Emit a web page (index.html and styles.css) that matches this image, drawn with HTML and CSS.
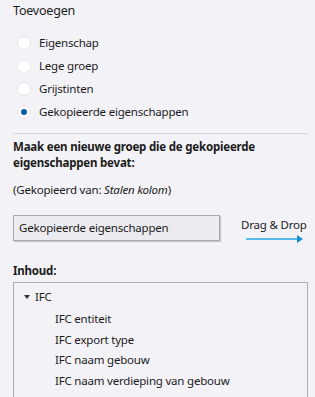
FILE: index.html
```html
<!DOCTYPE html>
<html lang="nl">
<head>
  <meta charset="UTF-8">
  <meta name="viewport" content="width=device-width, initial-scale=1.0">
  <title>Toevoegen</title>
  <link rel="stylesheet" href="styles.css">
</head>
<body>

  <div class="panel">
    <h2 class="title">Toevoegen</h2>

    <div class="radio-list">
      <label class="radio-row"><span class="radio"></span>Eigenschap</label>
      <label class="radio-row"><span class="radio"></span>Lege groep</label>
      <label class="radio-row"><span class="radio"></span>Grijstinten</label>
      <label class="radio-row"><span class="radio checked"></span>Gekopieerde eigenschappen</label>
    </div>

    <div class="separator"></div>

    <p class="intro">Maak een nieuwe groep die de gekopieerde eigenschappen bevat:</p>
    <p class="source">(Gekopieerd van: <em>Stalen kolom</em>)</p>

    <div class="name-row">
      <div class="name-box">Gekopieerde eigenschappen</div>
      <div class="drag">
        <span class="drag-label">Drag &amp; Drop</span>
        <svg class="drag-arrow" width="58" height="8" viewBox="0 0 58 8">
          <line x1="0" y1="4" x2="52" y2="4" stroke="#5ab9e6" stroke-width="2"/>
          <polygon points="51,0 57,4 51,8" fill="#1a8fd2"/>
        </svg>
      </div>
    </div>

    <p class="section-label">Inhoud:</p>

    <div class="tree">
      <div class="tree-node"><span class="caret"></span>IFC</div>
      <div class="tree-child">IFC entiteit</div>
      <div class="tree-child">IFC export type</div>
      <div class="tree-child">IFC naam gebouw</div>
      <div class="tree-child">IFC naam verdieping van gebouw</div>
    </div>
  </div>

</body>
</html>
```

FILE: styles.css
```css
body {
  background-color: #F3F2F7;
  font-family: "Noto Sans", "Open Sans", sans-serif;
  font-size: 11.5px;
  letter-spacing: -0.2px;
  color: #1b1b1b;
  margin: 0;
  padding: 0;
}

.panel {
  padding: 1px 7px 0 13px;
}

.title {
  font-size: 12.5px;
  font-weight: normal;
  line-height: 20px;
  margin: 0;
}

.radio-list {
  margin-top: 10px;
}

.radio-row {
  display: flex;
  align-items: center;
  height: 23px;
  padding-left: 4px;
}

.radio {
  width: 14px;
  height: 14px;
  box-sizing: border-box;
  border-radius: 50%;
  background: #FFF;
  border: 1px solid #E6E5EB;
  margin-right: 8px;
  display: flex;
  justify-content: center;
  align-items: center;
}

.radio.checked::after {
  content: "";
  width: 6px;
  height: 6px;
  border-radius: 50%;
  background: #0B5DA8;
}

.separator {
  height: 1px;
  background: #D8D7DD;
  margin-top: 10px;
}

.intro {
  font-weight: bold;
  line-height: 16px;
  margin: 5px 0 0;
  width: 262px;
}

.source {
  line-height: 16px;
  margin: 11px 0 0;
}

.name-row {
  display: flex;
  align-items: flex-start;
  margin-top: 17px;
}

.name-box {
  width: 207px;
  flex-shrink: 0;
  height: 26px;
  box-sizing: border-box;
  border: 1px solid #A9A9AE;
  box-shadow: 1px 1px 1px rgba(0, 0, 0, 0.18);
  background: #ECEBF0;
  padding-left: 5px;
  line-height: 24px;
}

.drag {
  margin-left: 21px;
  margin-top: 2px;
  display: flex;
  flex-direction: column;
  white-space: nowrap;
}

.drag-label {
  line-height: 16px;
}

.drag-arrow {
  margin: 2px 0 0 5px;
}

.section-label {
  font-weight: bold;
  line-height: 16px;
  margin: 20px 0 0;
}

.tree {
  margin-top: 3px;
  border: 1px solid #ADADB2;
  border-bottom: none;
  height: 120px;
  padding-top: 3px;
}

.tree-node {
  display: flex;
  align-items: center;
  height: 21px;
  padding-left: 10px;
  margin-bottom: 2px;
}

.caret {
  width: 0;
  height: 0;
  border-left: 3.5px solid transparent;
  border-right: 3.5px solid transparent;
  border-top: 4px solid #333;
  margin-right: 5px;
}

.tree-child {
  height: 20.5px;
  line-height: 20.5px;
  padding-left: 41px;
}
```
